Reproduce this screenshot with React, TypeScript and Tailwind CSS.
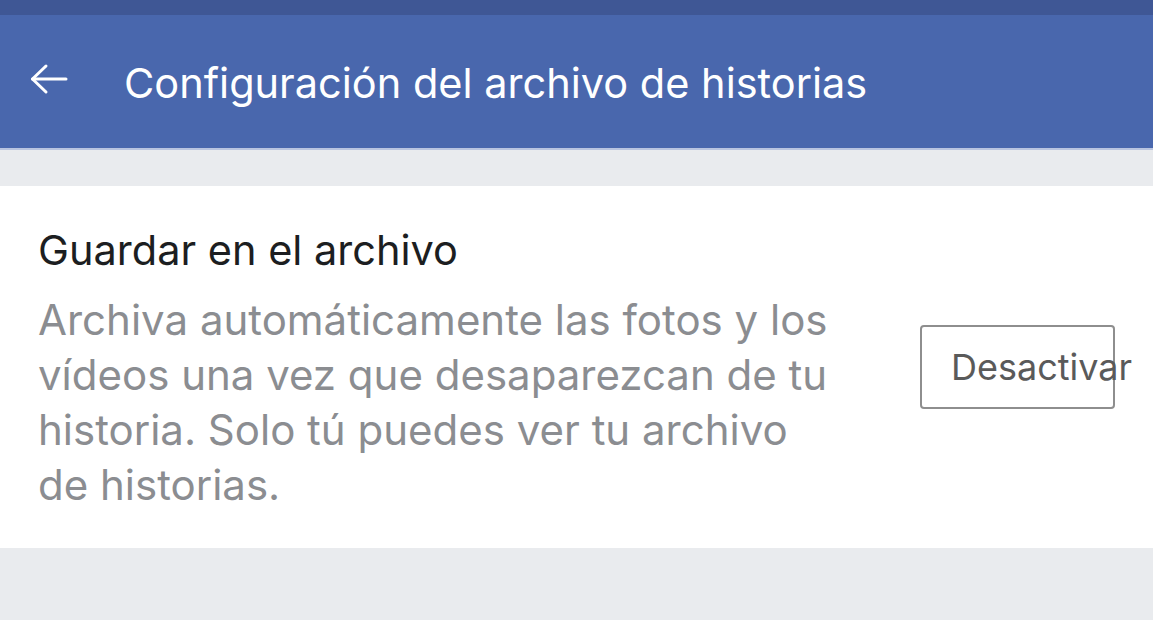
import React from "react";

export default function App() {
  return (
    <div className="w-[1153px] h-[620px] overflow-hidden bg-[#e9ebee] flex flex-col" style={{ fontFamily: 'Inter, "Liberation Sans", Arial, sans-serif' }}>
      <div className="h-[15px] bg-[#3f5795] shrink-0" />
      <div className="h-[133px] bg-[#4967ad] shrink-0 flex items-center">
        <div className="w-[124px] shrink-0 flex items-center pl-[30px] mt-[-5px]">
          <svg width="38" height="32" viewBox="0 0 38 32" fill="none" stroke="#ffffff" strokeWidth="3" strokeLinecap="round" strokeLinejoin="round">
            <path d="M2.5 16 H36" />
            <path d="M16 3 L2.5 16 L16 29" />
          </svg>
        </div>
        <div className="text-white text-[41.5px] leading-none pt-[4px] whitespace-nowrap">Configuración del archivo de historias</div>
      </div>
      <div className="h-[2px] bg-[#b9c4e0] shrink-0" />
      <div className="h-[36px] shrink-0" />
      <div className="h-[362px] bg-white shrink-0 flex items-start pl-[38px] pt-[42px]">
        <div className="w-[882px] shrink-0">
          <div className="text-[#1c1e21] text-[41.5px] leading-[44px] whitespace-nowrap">Guardar en el archivo</div>
          <div className="text-[#8b8d91] text-[42px] leading-[55px] mt-[20px] whitespace-nowrap">
            Archiva automáticamente las fotos y los<br />
            vídeos una vez que desaparezcan de tu<br />
            historia. Solo tú puedes ver tu archivo<br />
            de historias.
          </div>
        </div>
        <div className="mt-[97px] w-[195px] h-[84px] shrink-0 border-2 border-[#8e8e8e] rounded-[4px] flex items-center pl-[29px] overflow-visible">
          <span className="text-[#5a5a5a] text-[36px] leading-none whitespace-nowrap">Desactivar</span>
        </div>
      </div>
    </div>
  );
}
